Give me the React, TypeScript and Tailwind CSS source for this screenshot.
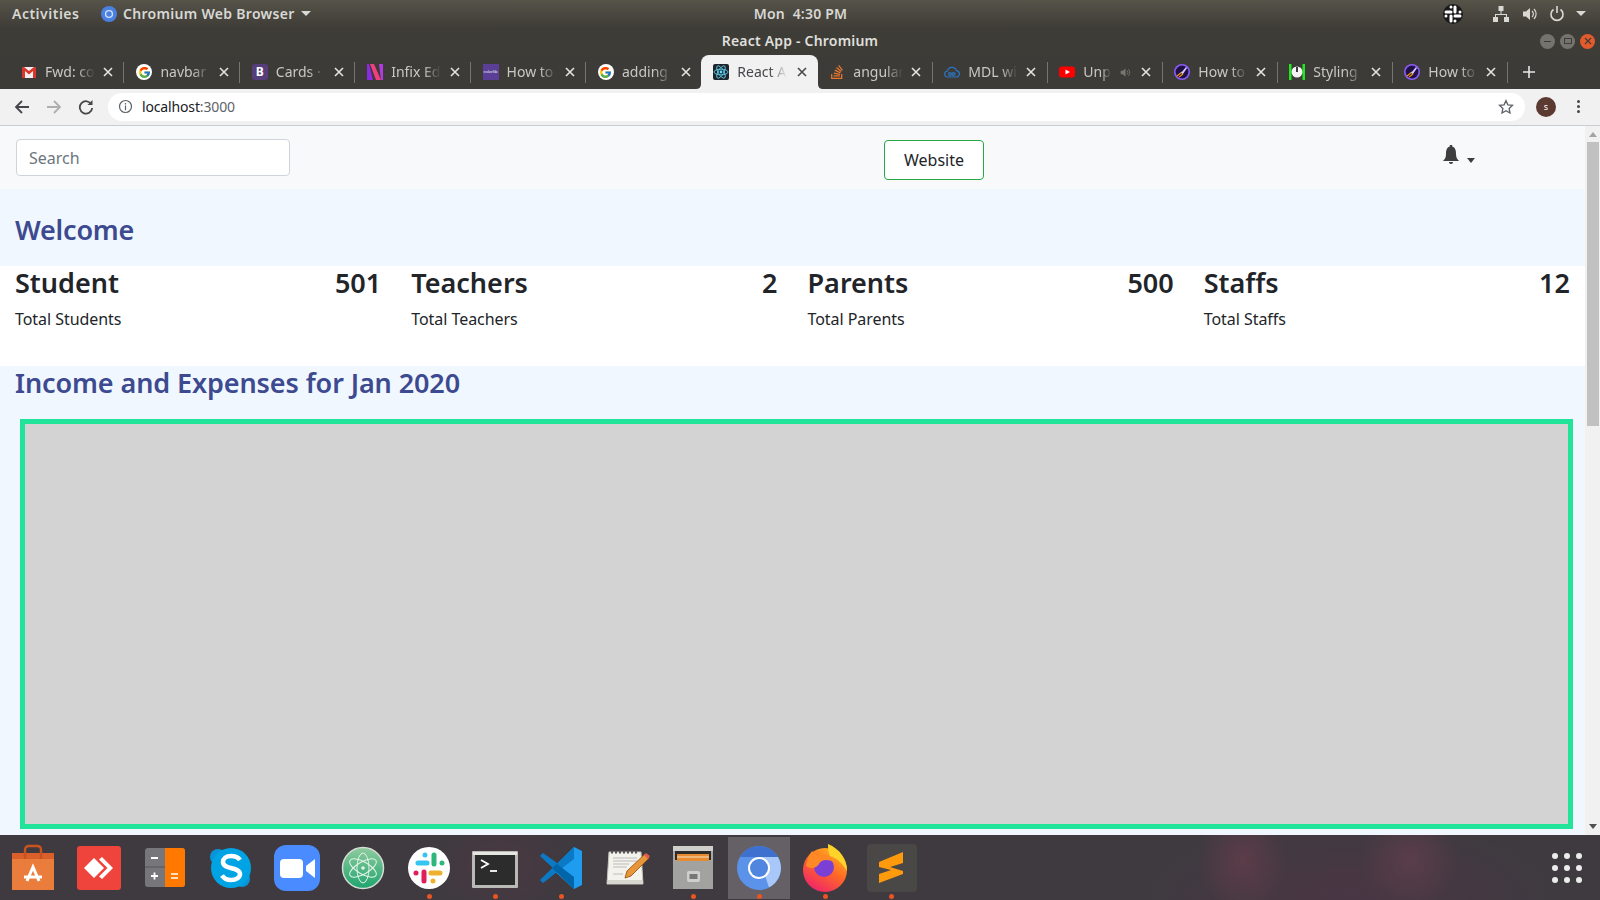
import { ReactNode } from 'react'
import { FcGoogle } from 'react-icons/fc'
import { FaStackOverflow } from 'react-icons/fa'

const Gmail = () => (
  <svg viewBox="0 0 16 16" className="h-4 w-4">
    <rect x="1" y="3" width="14" height="11" fill="#f1f1f1" />
    <path d="M1 3v11h3V7l4 3.5L12 7v7h3V3h-2L8 7 3 3z" fill="#d9372c" />
  </svg>
)

const Google = () => (
  <div className="flex h-4 w-4 items-center justify-center rounded-full bg-white">
    <FcGoogle className="h-[13px] w-[13px]" />
  </div>
)

const Bootstrap = () => (
  <div className="flex h-4 w-4 items-center justify-center rounded-[3px] bg-[#563d7c] text-[12px] leading-none font-bold text-white">
    B
  </div>
)

const Infix = () => (
  <svg viewBox="0 0 16 16" className="h-4 w-4">
    <path d="M0 0h2l4 16H0z" fill="#8a2be2" />
    <path d="M3 0h4l7 16H9z" fill="#ef3f7f" />
    <path d="M12 0h4v16h-2z" fill="#b13be0" />
  </svg>
)

const Colorlib = () => (
  <div className="flex h-4 w-4 items-center justify-center overflow-hidden bg-[#5b3e96] text-[4px] leading-none text-white">
    colorlib
  </div>
)

const ReactFav = () => (
  <svg viewBox="0 0 16 16" className="h-4 w-4">
    <rect width="16" height="16" rx="2" fill="#20232a" />
    <g fill="none" stroke="#61dafb" strokeWidth="0.8">
      <ellipse cx="8" cy="8" rx="7" ry="2.8" />
      <ellipse cx="8" cy="8" rx="7" ry="2.8" transform="rotate(60 8 8)" />
      <ellipse cx="8" cy="8" rx="7" ry="2.8" transform="rotate(120 8 8)" />
    </g>
    <circle cx="8" cy="8" r="1.4" fill="#61dafb" />
  </svg>
)

const Stack = () => <FaStackOverflow className="h-4 w-4 text-[#e8762d]" />

const Mdl = () => (
  <svg viewBox="0 0 16 16" className="h-4 w-4" fill="none" stroke="#2a76c6" strokeWidth="1.2">
    <path d="M4 13a3 3 0 0 1-.5-6A4.6 4.6 0 0 1 12.4 6.6 3.2 3.2 0 0 1 12 13z" />
    <circle cx="6" cy="10" r="1.4" />
    <circle cx="9.6" cy="10" r="1.4" />
  </svg>
)

const Youtube = () => (
  <svg viewBox="0 0 16 16" className="h-4 w-4">
    <rect x="0" y="2.5" width="16" height="11" rx="3" fill="#f00" />
    <path d="M6.5 5.5v5L11 8z" fill="#fff" />
  </svg>
)

const Rocket = () => (
  <svg viewBox="0 0 16 16" className="h-4 w-4">
    <circle cx="8" cy="8" r="8" fill="#8b5cf6" />
    <circle cx="8" cy="8" r="6.4" fill="#1f1147" />
    <path d="M3 12l5-4M5 13l4-3" stroke="#f59e0b" strokeWidth="1.1" />
    <path d="M7 9l5-6 1 1-4 6z" fill="#d8c8ff" />
  </svg>
)

const Styling = () => (
  <svg viewBox="0 0 16 16" className="h-4 w-4">
    <rect width="16" height="16" fill="#22e622" />
    <rect x="2.5" y="0" width="11" height="16" fill="#3c3b37" />
    <circle cx="8" cy="8" r="5.5" fill="#f5f5f5" />
    <rect x="7" y="3" width="2" height="5" fill="#3c3b37" />
  </svg>
)

const tabs: { title: string; icon: ReactNode; active?: boolean; muted?: boolean }[] = [
  { title: 'Fwd: co', icon: <Gmail /> },
  { title: 'navbar', icon: <Google /> },
  { title: 'Cards ·', icon: <Bootstrap /> },
  { title: 'Infix Ed', icon: <Infix /> },
  { title: 'How to', icon: <Colorlib /> },
  { title: 'adding', icon: <Google /> },
  { title: 'React A', icon: <ReactFav />, active: true },
  { title: 'angular', icon: <Stack /> },
  { title: 'MDL wi', icon: <Mdl /> },
  { title: 'Unp', icon: <Youtube />, muted: true },
  { title: 'How to', icon: <Rocket /> },
  { title: 'Styling', icon: <Styling /> },
  { title: 'How to', icon: <Rocket /> },
]

const Close = ({ dark }: { dark?: boolean }) => (
  <svg viewBox="0 0 10 10" className="h-[10px] w-[10px] shrink-0">
    <path d="M1 1l8 8M9 1l-8 8" stroke={dark ? '#45474a' : '#e4e4e2'} strokeWidth="1.6" />
  </svg>
)

const Speaker = ({ className, fill }: { className: string; fill: string }) => (
  <svg viewBox="0 0 16 16" className={className}>
    <path d="M1 5.5h3L8 2v12l-4-3.5H1z" fill={fill} />
    <path d="M10 5a4 4 0 0 1 0 6M12 3a7 7 0 0 1 0 10" stroke={fill} fill="none" strokeWidth="1.2" />
  </svg>
)

const TopBar = () => (
  <div className="flex h-[27px] items-center justify-between bg-[linear-gradient(#565349,#3f3d37)] pr-[14px] pl-3 text-[14px] font-semibold tracking-[0.2px] text-[#d8d8d4]">
    <div className="flex w-[500px] items-center">
      <span className="w-[89px] tracking-[0.5px]">Activities</span>
      <svg viewBox="0 0 16 16" className="h-4 w-4">
        <circle cx="8" cy="8" r="8" fill="#4a80e0" />
        <circle cx="8" cy="8" r="3.4" fill="none" stroke="#cfe0fb" strokeWidth="1.4" />
      </svg>
      <span className="ml-[6px] tracking-[0.3px]">Chromium Web Browser</span>
      <span className="ml-[6px] h-0 w-0 border-x-[5px] border-t-[5px] border-x-transparent border-t-[#d8d8d4]" />
    </div>
    <span className="pl-[3px] whitespace-pre">Mon  4:30 PM</span>
    <div className="flex w-[500px] items-center justify-end">
      <svg viewBox="0 0 20 20" className="mr-[30px] h-5 w-5">
        <circle cx="10" cy="10" r="10" fill="#1a1a1a" />
        <g stroke="#fff" strokeWidth="3" strokeLinecap="round">
          <path d="M3 8h5M12 12h5M8 3v0M12 17v0M12 3v5M8 12v5M17 8v0M3 12v0" />
        </g>
      </svg>
      <svg viewBox="0 0 16 16" className="mr-[13px] h-4 w-4" fill="#d8d8d4">
        <rect x="5.5" y="0" width="5" height="5" />
        <rect x="0" y="11" width="5" height="5" />
        <rect x="11" y="11" width="5" height="5" />
        <path d="M7.5 5h1v3H14v3h-1V9H3v2H2V8h5.5z" />
      </svg>
      <Speaker className="mr-[11px] h-4 w-4" fill="#d8d8d4" />
      <svg viewBox="0 0 16 16" className="mr-[11px] h-4 w-4" fill="none" stroke="#d8d8d4" strokeWidth="1.6">
        <path d="M4.5 3.5a6 6 0 1 0 7 0M8 0v7" />
      </svg>
      <span className="h-0 w-0 border-x-[5px] border-t-[5px] border-x-transparent border-t-[#d8d8d4]" />
    </div>
  </div>
)

const TitleBar = () => (
  <div className="flex h-[28px] items-center bg-[#3e3c37] pr-[5px] text-[14px] font-semibold tracking-[0.2px] text-[#dfdfdb]">
    <div className="w-[60px]" />
    <div className="flex-1 pb-[2px] text-center">React App - Chromium</div>
    <div className="flex w-[55px] items-center justify-end gap-[5px]">
      <div className="flex h-[15px] w-[15px] items-center justify-center rounded-full bg-[#75736d]">
        <span className="h-px w-[7px] bg-[#3e3c37]" />
      </div>
      <div className="flex h-[15px] w-[15px] items-center justify-center rounded-full bg-[#75736d]">
        <span className="h-[6px] w-[8px] border border-[#3e3c37]" />
      </div>
      <div className="flex h-[15px] w-[15px] items-center justify-center rounded-full bg-[#e35b2c]">
        <svg viewBox="0 0 8 8" className="h-2 w-2">
          <path d="M1 1l6 6M7 1L1 7" stroke="#3e3c37" strokeWidth="1.2" />
        </svg>
      </div>
    </div>
  </div>
)

const TabStrip = () => (
  <div className="flex h-[34px] items-stretch bg-[#3c3b37] pl-[9px]">
    {tabs.map((tab, index) => (
      <div
        key={index}
        className={
          (index < 6 ? 'w-[115.4px] pl-[12px] ' : index === 6 ? 'w-[117px] pl-[12px] ' : 'w-[115px] pl-[11px] ') +
          (tab.active
            ? 'relative flex items-center rounded-t-[8px] bg-[#f1f1f1] text-[#45474a]'
            : 'flex items-center text-[#c8c8c4]')
        }
      >
        {tab.active && (
          <>
            <svg viewBox="0 0 5 5" className="absolute bottom-0 -left-[5px] h-[5px] w-[5px]">
              <path d="M5 0v5H0q5 0 5-5z" fill="#f1f1f1" />
            </svg>
            <svg viewBox="0 0 5 5" className="absolute -right-[5px] bottom-0 h-[5px] w-[5px]">
              <path d="M0 0v5h5Q0 5 0 0z" fill="#f1f1f1" />
            </svg>
          </>
        )}
        {tab.icon}
        <div
          className={`ml-2 pb-px ${tab.muted ? 'w-[28px]' : 'w-[50px]'} overflow-hidden text-[14px] whitespace-nowrap [mask-image:linear-gradient(to_right,black_65%,transparent)]`}
        >
          {tab.title}
        </div>
        {tab.muted && <Speaker className="ml-[9px] h-[11px] w-[11px]" fill="#77766f" />}
        <div className={index < 6 ? 'mr-[10px] ml-auto' : 'mr-[11px] ml-auto'}>
          <Close dark={tab.active} />
        </div>
        {!tab.active && !tabs[index + 1]?.active && <div className="h-[21px] w-px shrink-0 bg-[#76756f]" />}
      </div>
    ))}
    <div className="ml-[15px] flex items-center">
      <svg viewBox="0 0 12 12" className="h-3 w-3">
        <path d="M6 0v12M0 6h12" stroke="#e8e8e6" strokeWidth="1.6" />
      </svg>
    </div>
  </div>
)

const Toolbar = () => (
  <div className="flex h-[37px] items-center border-b border-[#c9ccd1] bg-[#f1f1f1] pb-px">
    <svg viewBox="0 0 16 16" className="ml-[14px] h-4 w-4" fill="none" stroke="#45474a" strokeWidth="1.8">
      <path d="M15 8H2M8 2L2 8l6 6" />
    </svg>
    <svg viewBox="0 0 16 16" className="ml-[16px] h-4 w-4" fill="none" stroke="#aeafb1" strokeWidth="1.8">
      <path d="M1 8h13M8 2l6 6-6 6" />
    </svg>
    <svg viewBox="0 0 16 16" className="ml-[16px] h-4 w-4" fill="none" stroke="#45474a" strokeWidth="1.8">
      <path d="M13.5 5.5A6.2 6.2 0 1 0 14.2 9" />
      <path d="M14.5 1v5h-5" fill="#45474a" stroke="none" />
    </svg>
    <div className="ml-[14px] flex h-[28px] w-[1417px] items-center rounded-full bg-white pr-[11px] pl-[10px]">
      <svg viewBox="0 0 16 16" className="h-[15px] w-[15px]" fill="none" stroke="#5f6368" strokeWidth="1.3">
        <circle cx="8" cy="8" r="6.4" />
        <path d="M8 7v5M8 4.2v1.6" />
      </svg>
      <span className="ml-[9px] text-[14px] tracking-[-0.15px] text-[#202124]">
        localhost<span className="text-[#5f6368]">:3000</span>
      </span>
      <svg viewBox="0 0 24 24" className="ml-auto h-[16px] w-[16px]" fill="none" stroke="#5f6368" strokeWidth="2">
        <path d="M12 2.5l2.9 6.2 6.8.8-5 4.7 1.3 6.8-6-3.4-6 3.4 1.3-6.8-5-4.7 6.8-.8z" />
      </svg>
    </div>
    <div className="ml-[11px] flex h-5 w-5 items-center justify-center rounded-full bg-[#5b3a31] text-[9px] leading-none text-white">
      s
    </div>
    <div className="ml-[21px] flex flex-col gap-[2px]">
      <span className="h-[3px] w-[3px] rounded-full bg-[#45474a]" />
      <span className="h-[3px] w-[3px] rounded-full bg-[#45474a]" />
      <span className="h-[3px] w-[3px] rounded-full bg-[#45474a]" />
    </div>
  </div>
)

const cards = [
  { title: 'Student', count: 501, label: 'Total Students' },
  { title: 'Teachers', count: 2, label: 'Total Teachers' },
  { title: 'Parents', count: 500, label: 'Total Parents' },
  { title: 'Staffs', count: 12, label: 'Total Staffs' },
]

const Dashboard = () => (
  <div className="flex min-h-0 flex-1">
    <div className="flex min-w-0 flex-1 flex-col bg-[#f0f7ff]">
      <div className="flex h-[63px] bg-[#f8f9fa]">
        <div className="w-[884px] pt-[13px] pl-4">
          <div className="flex h-[37px] w-[274px] items-center rounded-[4px] border border-[#ced4da] bg-white pl-3 text-[16px] text-[#6c757d]">
            Search
          </div>
        </div>
        <div className="w-[556px] pt-[14px]">
          <div className="flex h-10 w-[100px] items-center justify-center rounded-[4px] border border-[#28a745] bg-white text-[16px] text-[#212529]">
            Website
          </div>
        </div>
        <div className="flex items-start pt-[19px] pl-[2px]">
          <svg viewBox="0 0 18 20" className="h-5 w-[18px]" fill="#3e3e3e">
            <path d="M9 0a1.2 1.2 0 0 1 1.2 1.6C13.5 2.5 14 6 14 9c0 3.5 1 5 3 7H1c2-2 3-3.5 3-7 0-3 .5-6.5 3.8-7.4A1.2 1.2 0 0 1 9 0z" />
            <path d="M7 17h4a2 2 0 0 1-4 0z" />
          </svg>
          <span className="mt-[13px] ml-[7px] h-0 w-0 border-x-[4.5px] border-t-[5px] border-x-transparent border-t-[#3e3e3e]" />
        </div>
      </div>

      <div className="flex h-[77px] items-center px-[15px] pt-[6px] text-[27px] font-semibold tracking-[-0.2px] text-[#3d4a8f]">
        Welcome
      </div>

      <div className="grid h-[100px] grid-cols-4 bg-white">
        {cards.map((card) => (
          <div key={card.title} className="px-[15px] text-[#212529]">
            <div className="flex items-center justify-between text-[27px] leading-[34px] font-semibold">
              <span>{card.title}</span>
              <span>{card.count}</span>
            </div>
            <p className="mt-[7px] text-[16px] leading-[24px] tracking-[-0.05px]">{card.label}</p>
          </div>
        ))}
      </div>

      <div className="flex h-[53px] items-start px-[15px] text-[27px] leading-[34px] font-semibold tracking-[-0.1px] text-[#3d4a8f]">
        Income and Expenses for Jan 2020
      </div>

      <div className="mr-3 ml-5 h-[410px] border-[5px] border-[#22e39a] bg-[#d3d3d3]" />
    </div>

    <div className="flex w-[15px] flex-col items-center bg-[#f1f1f1] pt-[6px]">
      <span className="h-0 w-0 border-x-[4px] border-b-[5px] border-x-transparent border-b-[#a3a3a3]" />
      <div className="mt-[5px] h-[284px] w-[12px] bg-[#c1c1c1]" />
      <span className="mt-auto mb-[6px] h-0 w-0 border-x-[4px] border-t-[5px] border-x-transparent border-t-[#505050]" />
    </div>
  </div>
)

const dockIcons: { key: string; running?: boolean; focused?: boolean; art: ReactNode }[] = [
  {
    key: 'software',
    art: (
      <>
        <path d="M12 18h42v37H12z" fill="#ea7d3c" />
        <path d="M12 18h42v6H12z" fill="#d9602a" />
        <path d="M25 24v-9q0-4 4-4h8q4 0 4 4v9" fill="none" stroke="#c9531f" strokeWidth="2.4" />
        <path d="M27 46l6-14 6 14" fill="none" stroke="#fff" strokeWidth="3" />
        <path d="M24 42h18" stroke="#fff" strokeWidth="3" />
      </>
    ),
  },
  {
    key: 'anydesk',
    art: (
      <>
        <rect x="11" y="11" width="44" height="44" rx="3" fill="#ef443b" />
        <path d="M18 33l10-10 10 10-10 10z" fill="#fff" />
        <path d="M36 22l11 11-11 11-3-2.5 8.5-8.5-8.5-8.5z" fill="#fff" />
      </>
    ),
  },
  {
    key: 'calculator',
    art: (
      <>
        <rect x="13" y="13" width="40" height="39" rx="3" fill="#77767b" />
        <path d="M33 13h17q3 0 3 3v33q0 3-3 3H33z" fill="#ff7800" />
        <path d="M13 32h20" stroke="#56555a" />
        <path d="M19 23h7M19 41h7M22.5 37.5v7" stroke="#fff" strokeWidth="1.8" />
        <path d="M39 39h7M39 43h7" stroke="#fff" strokeWidth="1.6" />
      </>
    ),
  },
  {
    key: 'skype',
    art: (
      <>
        <circle cx="20" cy="22" r="8" fill="#0a94d8" />
        <circle cx="44" cy="44" r="8" fill="#0a94d8" />
        <circle cx="33" cy="33" r="20" fill="#00a4e4" />
        <path d="M42 25c-2-3-6-4-9-4-5 0-8 2.5-8 6 0 8 17 4.5 17 12 0 3.5-4 6-9 6-4 0-7-1.5-9-4.5" fill="none" stroke="#fff" strokeWidth="4.5" />
      </>
    ),
  },
  {
    key: 'zoom',
    art: (
      <>
        <rect x="10" y="10" width="46" height="46" rx="12" fill="#4a8cff" />
        <rect x="16" y="24" width="23" height="19" rx="4" fill="#fff" />
        <path d="M42 31l9-7v19l-9-7z" fill="#fff" />
      </>
    ),
  },
  {
    key: 'atom',
    art: (
      <>
        <defs>
          <linearGradient id="atomFill" x1="0" y1="0" x2="0" y2="1">
            <stop offset="0" stopColor="#8fcb9d" />
            <stop offset="1" stopColor="#1ea56f" />
          </linearGradient>
        </defs>
        <circle cx="33" cy="33" r="20.5" fill="url(#atomFill)" stroke="#d5dbd5" strokeWidth="1.5" />
        <g fill="none" stroke="#e4f3e8" strokeWidth="1">
          <ellipse cx="33" cy="33" rx="15" ry="6" transform="rotate(30 33 33)" />
          <ellipse cx="33" cy="33" rx="15" ry="6" transform="rotate(90 33 33)" />
          <ellipse cx="33" cy="33" rx="15" ry="6" transform="rotate(150 33 33)" />
        </g>
        <circle cx="33" cy="33" r="1.8" fill="#e4f3e8" />
      </>
    ),
  },
  {
    key: 'slack',
    running: true,
    art: (
      <>
        <circle cx="33" cy="33" r="21" fill="#fff" />
        <g fill="none" strokeLinecap="round" strokeWidth="5">
          <path d="M22 28h9M29 20v0" stroke="#36c5f0" />
          <path d="M38 20v9M46 28v0" stroke="#2eb67d" />
          <path d="M44 38h-9M37 46v0" stroke="#ecb22e" />
          <path d="M28 46v-9M20 38v0" stroke="#e01e5a" />
        </g>
      </>
    ),
  },
  {
    key: 'terminal',
    running: true,
    art: (
      <>
        <rect x="10" y="16" width="46" height="37" rx="1" fill="#b9b9b6" />
        <rect x="11" y="17" width="44" height="3" fill="#e6e6e3" />
        <rect x="13" y="20" width="40" height="30" fill="#2c2c2c" />
        <path d="M19 25l7 4-7 4" fill="none" stroke="#fff" strokeWidth="1.8" />
        <path d="M28 36h7" stroke="#fff" strokeWidth="1.8" />
      </>
    ),
  },
  {
    key: 'vscode',
    running: true,
    art: (
      <>
        <path d="M46 12l8 4v34l-8 4-22-20z" fill="#1f9cf0" />
        <path d="M46 12v12L29 37l-14 11-3-3zM12 21l3-3 14 10-4 5z" fill="#0b7ac6" />
        <path d="M46 54V42L29 29l-5 4z" fill="#0065a9" />
      </>
    ),
  },
  {
    key: 'editor',
    art: (
      <>
        <path d="M15 17h32l2 32H13z" fill="#f3f2ec" stroke="#c5c4bc" />
        <path d="M13.5 45h35v4h-35z" fill="#d8d7cf" />
        <path d="M19 23h24M19 26h24M19 29h16M19 32h14M19 39h10" stroke="#bbb" />
        <path d="M17 17h26" stroke="#555" strokeWidth="3" strokeDasharray="2 2" />
        <path d="M33 36l18-17 4 4-18 18-6 2z" fill="#e8963a" stroke="#a8611a" />
        <path d="M50 20l2-2 4 3-2 3z" fill="#e05a50" />
      </>
    ),
  },
  {
    key: 'files',
    running: true,
    art: (
      <>
        <rect x="13" y="11" width="40" height="43" rx="2" fill="#a8a8a6" />
        <rect x="13" y="11" width="40" height="5" fill="#cfcfcc" />
        <rect x="15" y="16" width="36" height="9" fill="#2e2c2a" />
        <rect x="17" y="19" width="32" height="7" fill="#e78a32" />
        <path d="M17 22h32" stroke="#fbe3c0" />
        <rect x="13" y="26" width="40" height="28" fill="#a2a2a0" />
        <rect x="27" y="36" width="13" height="11" rx="2" fill="#cfcfcc" />
        <rect x="29.5" y="39" width="8" height="5" fill="#777" />
      </>
    ),
  },
  {
    key: 'chromium',
    running: true,
    focused: true,
    art: (
      <>
        <circle cx="33" cy="33" r="22" fill="#5b93ea" />
        <path d="M14 22A22 22 0 0 1 52 22H33z" fill="#3e70cf" />
        <path d="M43 52.5A22 22 0 0 0 52 22H33z" fill="#a8c8fa" />
        <circle cx="33" cy="33" r="11" fill="#fff" />
        <circle cx="33" cy="33" r="9" fill="#5086e0" />
      </>
    ),
  },
  {
    key: 'firefox',
    running: true,
    art: (
      <>
        <defs>
          <linearGradient id="ff" x1="0.9" y1="0" x2="0.3" y2="1">
            <stop offset="0" stopColor="#ffc21f" />
            <stop offset="0.5" stopColor="#ff6a25" />
            <stop offset="1" stopColor="#f0246b" />
          </linearGradient>
        </defs>
        <circle cx="33" cy="35" r="22" fill="url(#ff)" />
        <path d="M36 9c12 5 19 15 19 27-4-7-10-13-17-15-2-4-2-8-2-12z" fill="#ffd42a" />
        <circle cx="32" cy="32" r="10" fill="#7b3fd6" />
        <path d="M14 31c1-6 3-11 6-15 2 3 4 4 8 5 5-2 11 1 14 6-6-3-13-3-15 2-3 5-9 5-13 2z" fill="#ff8a25" />
      </>
    ),
  },
  {
    key: 'sublime',
    running: true,
    art: (
      <>
        <rect x="9" y="9" width="50" height="48" rx="4" fill="#4a4846" />
        <path d="M21 27l24-10v11l-13 4 13 4v3l-24 9v-9l12-4-12-3z" fill="#ff9a0d" />
      </>
    ),
  },
]

const Dock = () => (
  <div className="flex h-[65px] bg-[#3e3a40] bg-[radial-gradient(ellipse_45px_55px_at_1243px_25px,#5c3c49,transparent),radial-gradient(ellipse_50px_50px_at_1410px_25px,#5a3d4a,transparent),radial-gradient(ellipse_220px_80px_at_1350px_60px,#4a3644,transparent),radial-gradient(ellipse_70px_50px_at_500px_30px,#4c3841,transparent)] pr-[12px]">
    {dockIcons.map((item) => (
      <div
        key={item.key}
        className={
          item.focused
            ? 'relative h-[65px] w-[66px] bg-[linear-gradient(to_bottom,transparent_2px,#655f66_2px,#655f66_64px,transparent_64px)] bg-[length:62px_100%] bg-[position:center] bg-no-repeat'
            : 'relative h-[65px] w-[66px]'
        }
      >
        <svg viewBox="0 0 66 65" className="h-[65px] w-[66px]">
          {item.art}
        </svg>
        {item.running && (
          <span className="absolute bottom-[1.5px] left-[30.5px] h-[5px] w-[5px] rounded-full bg-[#e95420]" />
        )}
      </div>
    ))}
    <div className="ml-auto grid grid-cols-3 content-center gap-[6px] pr-[6px]">
      {Array.from({ length: 9 }).map((_, index) => (
        <span key={index} className="h-[6px] w-[6px] rounded-full bg-[#ececec]" />
      ))}
    </div>
  </div>
)

const App = () => (
  <div className="flex h-screen w-full flex-col overflow-hidden bg-white font-['Noto_Sans',sans-serif]">
    <TopBar />
    <TitleBar />
    <TabStrip />
    <Toolbar />
    <Dashboard />
    <Dock />
  </div>
)

export default App
